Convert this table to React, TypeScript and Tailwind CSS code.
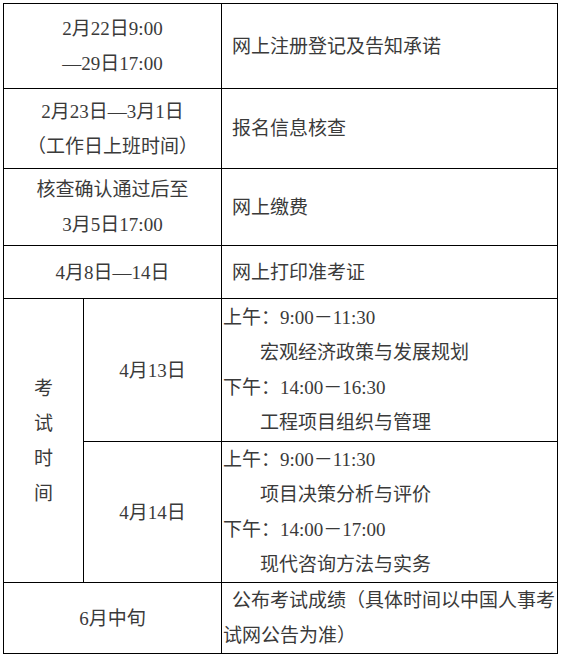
const font = { fontFamily: '"Liberation Serif", "Noto Sans CJK SC", serif' };

function Lines({ lines }: { lines: string[] }) {
  return (
    <>
      {lines.map((l) => (
        <div key={l}>{l}</div>
      ))}
    </>
  );
}

function Session({ am, amSubject, pm, pmSubject }: { am: string; amSubject: string; pm: string; pmSubject: string }) {
  return (
    <div className="pl-[1px]">
      <div>上午：{am}</div>
      <div className="pl-[37px]">{amSubject}</div>
      <div>下午：{pm}</div>
      <div className="pl-[37px]">{pmSubject}</div>
    </div>
  );
}

export default function App() {
  const cell = "border border-black align-middle";
  return (
    <div className="bg-white w-[565px] h-[657px] pt-[3px] pl-[3px]" style={font}>
      <table className="border-collapse table-fixed w-[554px] text-[19px] leading-[35px] text-[#3a3a3a] whitespace-nowrap">
        <colgroup>
          <col className="w-[80px]" />
          <col className="w-[138px]" />
          <col className="w-[336px]" />
        </colgroup>
        <tbody>
          <tr className="h-[85px]">
            <td colSpan={2} className={`${cell} text-center`}>
              <Lines lines={["2月22日9:00", "—29日17:00"]} />
            </td>
            <td className={`${cell} pl-[10px]`}>网上注册登记及告知承诺</td>
          </tr>
          <tr className="h-[80px]">
            <td colSpan={2} className={`${cell} text-center`}>
              <Lines lines={["2月23日—3月1日", "（工作日上班时间）"]} />
            </td>
            <td className={`${cell} pl-[10px]`}>报名信息核查</td>
          </tr>
          <tr className="h-[77px]">
            <td colSpan={2} className={`${cell} text-center`}>
              <Lines lines={["核查确认通过后至", "3月5日17:00"]} />
            </td>
            <td className={`${cell} pl-[10px]`}>网上缴费</td>
          </tr>
          <tr className="h-[53px]">
            <td colSpan={2} className={`${cell} text-center`}>4月8日—14日</td>
            <td className={`${cell} pl-[10px]`}>网上打印准考证</td>
          </tr>
          <tr className="h-[143px]">
            <td rowSpan={2} className={`${cell} text-center`}>
              <Lines lines={["考", "试", "时", "间"]} />
            </td>
            <td className={`${cell} text-center`}>4月13日</td>
            <td className={cell}>
              <Session am="9:00－11:30" amSubject="宏观经济政策与发展规划" pm="14:00－16:30" pmSubject="工程项目组织与管理" />
            </td>
          </tr>
          <tr className="h-[141px]">
            <td className={`${cell} text-center`}>4月14日</td>
            <td className={cell}>
              <Session am="9:00－11:30" amSubject="项目决策分析与评价" pm="14:00－17:00" pmSubject="现代咨询方法与实务" />
            </td>
          </tr>
          <tr className="h-[71px]">
            <td colSpan={2} className={`${cell} text-center`}>6月中旬</td>
            <td className={`${cell} pl-[1px]`}>
              <div className="pl-[9px]">公布考试成绩（具体时间以中国人事考</div>
              <div>试网公告为准）</div>
            </td>
          </tr>
        </tbody>
      </table>
    </div>
  );
}
